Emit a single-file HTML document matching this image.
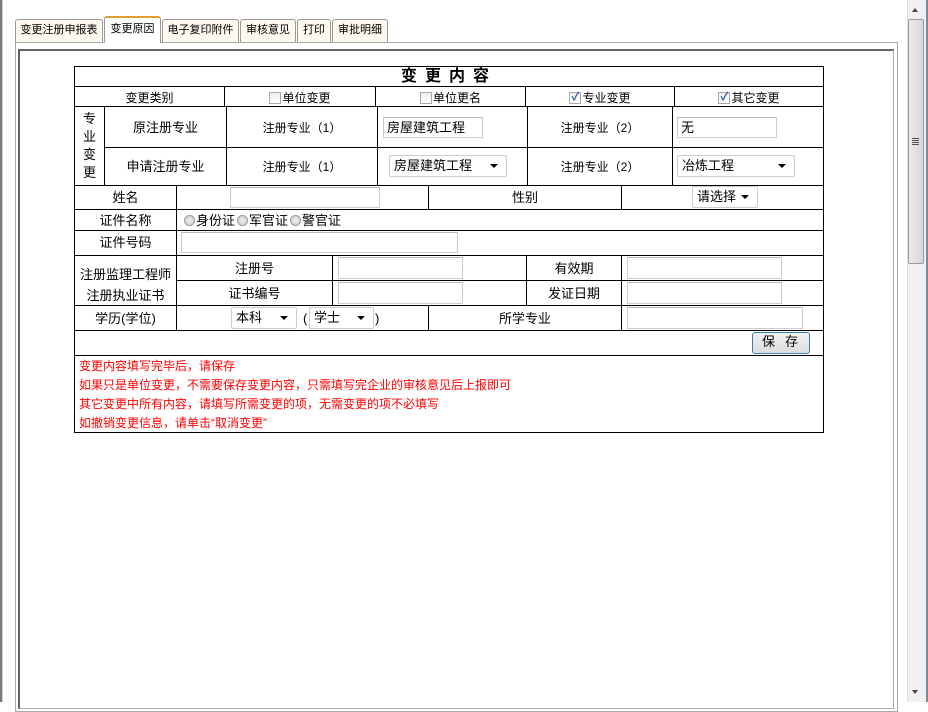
<!DOCTYPE html>
<html><head><meta charset="utf-8"><style>
*{margin:0;padding:0;box-sizing:border-box}
body{width:928px;height:702px;overflow:hidden;background:#fff;position:relative;font-family:"Liberation Sans","Noto Sans CJK SC","WenQuanYi Zen Hei",sans-serif;font-size:12px;color:#000}
.a{position:absolute}
.h{position:absolute;height:1px;background:#000}
.v{position:absolute;width:1px;background:#000}
.t{position:absolute;text-align:center;line-height:14px;white-space:nowrap}
.in{position:absolute;border:1px solid #ccc;border-top-color:#bbb;background:#fff;padding-left:3px;line-height:19px;font-size:13px}
.sel{position:absolute;border:1px solid #ccc;background:#fff;padding-left:4px;line-height:19px;font-size:13px;border-radius:2px}
.sel:after{content:"";position:absolute;right:8px;top:8px;border:4px solid transparent;border-top:4px solid #000;border-bottom:0}
.tab{position:absolute;top:19px;height:23px;border:1px solid #9a9a9a;border-bottom:none;background:#fdf9ef;font-size:11px;text-align:center;line-height:20px;border-radius:3px 3px 0 0}
.cb{display:inline-block;width:12px;height:12px;border:1px solid #aaa;background:linear-gradient(#eee,#fff);vertical-align:-2px;margin-right:1px;position:relative}
.cb.k:after{content:"✓";position:absolute;left:1px;top:-3px;font-size:11px;color:#2a4fa0;font-weight:bold}
.rd{display:inline-block;width:11px;height:11px;border:1px solid #999;border-radius:50%;background:radial-gradient(#eee,#ccc);vertical-align:-1px;margin:0 1px 0 2px}
.red{position:absolute;left:79px;color:#f00;font-size:12px;line-height:14px;white-space:nowrap}
</style></head><body>
<!-- outer borders -->
<div class="a" style="left:0;top:0;width:2px;height:702px;background:#7a7a7a"></div>
<div class="a" style="left:2px;top:0;width:1px;height:702px;background:#d0d0d0"></div>
<!-- scrollbar -->
<div class="a" style="left:907px;top:0;width:21px;height:702px;background:#f0f0f0;border-left:1px solid #ddd"></div>
<div class="a" style="left:908px;top:19px;width:16px;height:245px;border:1px solid #999;border-radius:2px;background:linear-gradient(90deg,#eaeaea,#d8d8d8)"></div>
<div class="a" style="left:912px;top:138px;width:7px;height:1px;background:#555;box-shadow:0 2px 0 #555,0 4px 0 #555,0 6px 0 #555"></div>
<div class="a" style="left:912px;top:8px;border:3px solid transparent;border-bottom:4px solid #444;border-top:0"></div>
<div class="a" style="left:912px;top:690px;border:3px solid transparent;border-top:4px solid #444;border-bottom:0"></div>
<div class="a" style="left:926px;top:0;width:2px;height:702px;background:#7a8a99"></div>
<!-- tabs -->
<div class="tab" style="left:15px;width:88px">变更注册申报表</div>
<div class="tab" style="left:104px;width:57px;top:16px;height:27px;background:#fff;border-top:2px solid #e0a030;z-index:2;line-height:22px">变更原因</div>
<div class="tab" style="left:162px;width:77px">电子复印附件</div>
<div class="tab" style="left:240px;width:56px">审核意见</div>
<div class="tab" style="left:297px;width:34px">打印</div>
<div class="tab" style="left:332px;width:56px">审批明细</div>
<!-- panel -->
<div class="a" style="left:15px;top:42px;width:883px;height:670px;border:1px solid #aaa"></div>
<div class="a" style="left:18px;top:49px;width:876px;height:660px;border:1px solid #aaa;border-top:2px solid #666;border-left:2px solid #666"></div>

<!-- table frame -->
<div class="a" style="left:74px;top:66px;width:750px;height:367px;border:1px solid #000"></div>
<div class="t" style="left:75px;width:748px;top:68px;font-size:16px;font-weight:bold;line-height:18px;letter-spacing:8px;">变更内容</div>
<div class="h" style="left:74px;width:750px;top:86px"></div>
<!-- type row -->
<div class="v" style="left:224px;top:86px;height:21px"></div>
<div class="v" style="left:375px;top:86px;height:21px"></div>
<div class="v" style="left:525px;top:86px;height:21px"></div>
<div class="v" style="left:674px;top:86px;height:21px"></div>
<div class="t" style="left:75px;width:149px;top:91px">变更类别</div>
<div class="t" style="left:225px;width:150px;top:91px"><span class="cb"></span>单位变更</div>
<div class="t" style="left:376px;width:149px;top:91px"><span class="cb"></span>单位更名</div>
<div class="t" style="left:526px;width:148px;top:91px"><span class="cb k"></span>专业变更</div>
<div class="t" style="left:675px;width:148px;top:91px"><span class="cb k"></span>其它变更</div>
<div class="h" style="left:74px;width:750px;top:106px"></div>
<!-- major rows -->
<div class="v" style="left:104px;top:106px;height:80px"></div>
<div class="v" style="left:226px;top:106px;height:80px"></div>
<div class="v" style="left:377px;top:106px;height:80px"></div>
<div class="v" style="left:527px;top:106px;height:80px"></div>
<div class="v" style="left:672px;top:106px;height:80px"></div>
<div class="h" style="left:104px;width:720px;top:147px"></div>
<div class="t" style="left:75px;width:29px;top:110px;line-height:18px;white-space:normal;font-size:13px">专<br>业<br>变<br>更</div>
<div class="t" style="left:105px;width:121px;top:121px;font-size:13px">原注册专业</div>
<div class="t" style="left:227px;width:150px;top:121px">注册专业（1）</div>
<div class="in" style="left:383px;top:117px;width:100px;height:21px">房屋建筑工程</div>
<div class="t" style="left:528px;width:144px;top:121px">注册专业（2）</div>
<div class="in" style="left:677px;top:117px;width:100px;height:21px">无</div>
<div class="t" style="left:105px;width:121px;top:160px;font-size:13px">申请注册专业</div>
<div class="t" style="left:227px;width:150px;top:160px">注册专业（1）</div>
<div class="sel" style="left:389px;top:155px;width:118px;height:22px">房屋建筑工程</div>
<div class="t" style="left:528px;width:144px;top:160px">注册专业（2）</div>
<div class="sel" style="left:677px;top:155px;width:118px;height:22px">冶炼工程</div>
<div class="h" style="left:74px;width:750px;top:185px"></div>
<!-- name -->
<div class="v" style="left:176px;top:185px;height:146px"></div>
<div class="v" style="left:428px;top:185px;height:25px"></div>
<div class="v" style="left:621px;top:185px;height:25px"></div>
<div class="t" style="left:75px;width:101px;top:191px;font-size:13px">姓名</div>
<div class="in" style="left:230px;top:187px;width:150px;height:21px"></div>
<div class="t" style="left:429px;width:192px;top:191px;font-size:13px">性别</div>
<div class="sel" style="left:692px;top:186px;width:66px;height:22px">请选择</div>
<div class="h" style="left:74px;width:750px;top:209px"></div>
<div class="t" style="left:75px;width:101px;top:214px;font-size:13px">证件名称</div>
<div class="a" style="left:182px;top:214px;font-size:13px;line-height:14px;white-space:nowrap"><span class="rd"></span>身份证<span class="rd"></span>军官证<span class="rd"></span>警官证</div>
<div class="h" style="left:74px;width:750px;top:230px"></div>
<div class="t" style="left:75px;width:101px;top:236px;font-size:13px">证件号码</div>
<div class="in" style="left:181px;top:232px;width:277px;height:21px"></div>
<div class="h" style="left:74px;width:750px;top:255px"></div>
<!-- cert -->
<div class="v" style="left:332px;top:255px;height:51px"></div>
<div class="v" style="left:526px;top:255px;height:51px"></div>
<div class="v" style="left:621px;top:255px;height:76px"></div>
<div class="h" style="left:176px;width:648px;top:280px"></div>
<div class="t" style="left:75px;width:101px;top:264px;line-height:21px;font-size:13px">注册监理工程师<br>注册执业证书</div>
<div class="t" style="left:177px;width:155px;top:262px;font-size:13px">注册号</div>
<div class="in" style="left:338px;top:257px;width:125px;height:22px"></div>
<div class="t" style="left:527px;width:94px;top:262px;font-size:13px">有效期</div>
<div class="in" style="left:627px;top:257px;width:155px;height:22px"></div>
<div class="t" style="left:177px;width:155px;top:287px;font-size:13px">证书编号</div>
<div class="in" style="left:338px;top:282px;width:125px;height:22px"></div>
<div class="t" style="left:527px;width:94px;top:287px;font-size:13px">发证日期</div>
<div class="in" style="left:627px;top:282px;width:155px;height:22px"></div>
<div class="h" style="left:74px;width:750px;top:305px"></div>
<!-- edu -->
<div class="v" style="left:428px;top:305px;height:26px"></div>
<div class="t" style="left:75px;width:101px;top:312px;font-size:13px">学历(学位)</div>
<div class="sel" style="left:231px;top:307px;width:66px;height:22px">本科</div>
<div class="a" style="left:303px;top:312px;font-size:13px;line-height:14px">(</div>
<div class="sel" style="left:309px;top:307px;width:65px;height:22px">学士</div>
<div class="a" style="left:375px;top:312px;font-size:13px;line-height:14px">)</div>
<div class="t" style="left:429px;width:192px;top:312px;font-size:13px">所学专业</div>
<div class="in" style="left:627px;top:307px;width:176px;height:22px"></div>
<div class="h" style="left:74px;width:750px;top:330px"></div>
<div class="a" style="left:752px;top:332px;width:58px;height:22px;border:1px solid #3c7fb1;border-radius:3px;background:linear-gradient(#f2f2f2,#dcdcdc);text-align:center;line-height:18px;font-size:13px;letter-spacing:10px;padding-left:8px">保存</div>
<div class="h" style="left:74px;width:750px;top:355px"></div>
<div class="red" style="top:359px">变更内容填写完毕后，请保存</div>
<div class="red" style="top:378px">如果只是单位变更，不需要保存变更内容，只需填写完企业的审核意见后上报即可</div>
<div class="red" style="top:397px">其它变更中所有内容，请填写所需变更的项，无需变更的项不必填写</div>
<div class="red" style="top:416px">如撤销变更信息，请单击“取消变更”</div>
</body></html>
